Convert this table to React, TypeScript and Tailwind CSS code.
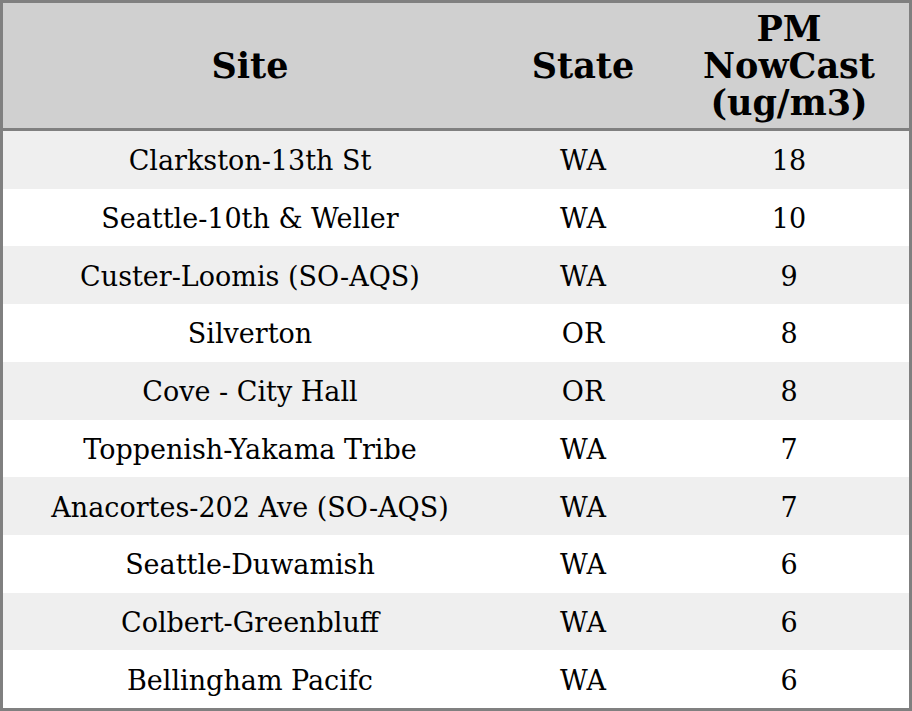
import React from "react";

const rows: [string, string, string][] = [
  ["Clarkston-13th St", "WA", "18"],
  ["Seattle-10th & Weller", "WA", "10"],
  ["Custer-Loomis (SO-AQS)", "WA", "9"],
  ["Silverton", "OR", "8"],
  ["Cove - City Hall", "OR", "8"],
  ["Toppenish-Yakama Tribe", "WA", "7"],
  ["Anacortes-202 Ave (SO-AQS)", "WA", "7"],
  ["Seattle-Duwamish", "WA", "6"],
  ["Colbert-Greenbluff", "WA", "6"],
  ["Bellingham Pacifc", "WA", "6"],
];

export default function App() {
  return (
    <div
      className="w-[912px] h-[711px] bg-white text-black"
      style={{ fontFamily: '"DejaVu Serif", serif' }}
    >
      <div className="w-[912px] h-[711px] border-[3px] border-[#808080] flex flex-col">
        <div className="h-[125px] bg-[#d0d0d0] border-b-[3px] border-[#808080] flex items-center text-[35px] font-bold leading-[37px] text-center box-content">
          <div className="w-[494px]">Site</div>
          <div className="w-[172px]">State</div>
          <div className="w-[240px]">
            PM
            <br />
            NowCast
            <br />
            (ug/m3)
          </div>
        </div>
        {rows.map((r, i) => (
          <div
            key={i}
            className={`flex-1 flex items-center pt-[3px] text-[27px] leading-[32px] text-center ${
              i % 2 === 0 ? "bg-[#efefef]" : "bg-white"
            }`}
          >
            <div className="w-[494px]">{r[0]}</div>
            <div className="w-[172px]">{r[1]}</div>
            <div className="w-[240px]">{r[2]}</div>
          </div>
        ))}
      </div>
    </div>
  );
}
